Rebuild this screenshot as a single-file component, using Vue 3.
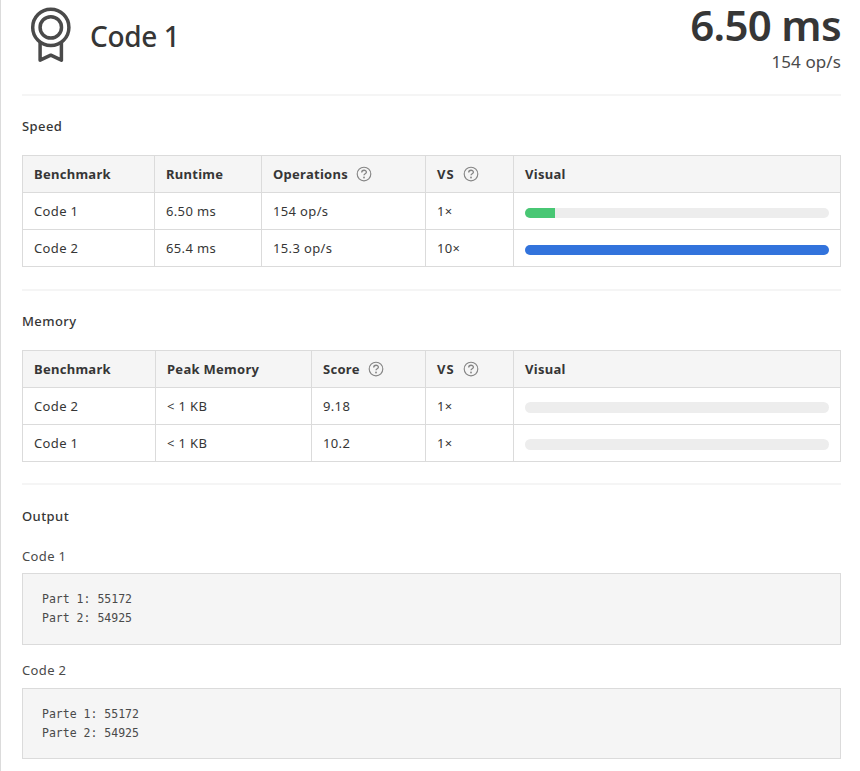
<script setup>
const speed = {
  title: 'Speed',
  widths: [132, 107, 164, 88, 327],
  heads: [['Benchmark'], ['Runtime'], ['Operations', true], ['VS', true], ['Visual']],
  rows: [
    { cells: ['Code 1', '6.50 ms', '154 op/s'], vs: '1', pct: 10, color: '#48c774' },
    { cells: ['Code 2', '65.4 ms', '15.3 op/s'], vs: '10', pct: 100, color: '#3273dc' },
  ],
}
const memory = {
  title: 'Memory',
  widths: [133, 156, 114, 88, 327],
  heads: [['Benchmark'], ['Peak Memory'], ['Score', true], ['VS', true], ['Visual']],
  rows: [
    { cells: ['Code 2', '< 1 KB', '9.18'], vs: '1', pct: 0, color: '#48c774', tall: true },
    { cells: ['Code 1', '< 1 KB', '10.2'], vs: '1', pct: 0, color: '#3273dc', tall: true },
  ],
}
const outputs = [
  { name: 'Code 1', text: 'Part 1: 55172\nPart 2: 54925' },
  { name: 'Code 2', text: 'Parte 1: 55172\nParte 2: 54925' },
]
</script>

<template>
  <main class="panel">
    <header class="hero">
      <svg class="award" viewBox="0 0 42 56" fill="none" stroke="#4a4a4a" stroke-width="3.5">
        <circle cx="20.8" cy="20.4" r="18.1" />
        <circle cx="20.8" cy="20.4" r="10.7" />
        <path d="M10.1 35v18.2l10.7-5 10.6 5V35" stroke-linejoin="round" />
      </svg>
      <h1 class="winner">Code 1</h1>
      <div class="result">
        <div class="time">6.50 ms</div>
        <div class="ops">154 op/s</div>
      </div>
    </header>

    <section v-for="s in [speed, memory]" :key="s.title" class="section">
      <h2 class="title">{{ s.title }}</h2>
      <table class="table">
        <colgroup>
          <col v-for="(w, i) in s.widths" :key="i" :style="{ width: w + 'px' }" />
        </colgroup>
        <thead>
          <tr>
            <th v-for="h in s.heads" :key="h[0]">
              <div class="head">
                <span :class="{ vs: h[0] === 'VS' }">{{ h[0] }}</span>
                <svg v-if="h[1]" class="help" viewBox="0 0 16 16" fill="none" stroke="#858585" stroke-width="1.15">
                  <circle cx="8" cy="8" r="6.8" />
                  <path d="M5.7 6.5C5.7 3.5 10.4 3.6 10.4 6.2C10.4 7.8 8 7.7 8 9.3" stroke-width="1.35" />
                  <circle cx="8" cy="11.5" r=".9" fill="#858585" stroke="none" />
                </svg>
              </div>
            </th>
          </tr>
        </thead>
        <tbody>
          <tr v-for="r in s.rows" :key="r.cells[0]">
            <td v-for="c in r.cells" :key="c">{{ c }}</td>
            <td><span>{{ r.vs }}</span><span class="times">×</span></td>
            <td>
              <div class="bar" :class="{ tall: r.tall }">
                <div class="fill" :style="{ width: r.pct + '%', background: r.color }"></div>
              </div>
            </td>
          </tr>
        </tbody>
      </table>
    </section>

    <section class="output">
      <h2 class="title">Output</h2>
      <div v-for="o in outputs" :key="o.name" class="block">
        <div class="name">{{ o.name }}</div>
        <pre class="code">{{ o.text }}</pre>
      </div>
    </section>
  </main>
</template>

<style>
body {
  margin: 0;
  background: #fff;
}
</style>

<style scoped>
.panel {
  box-sizing: border-box;
  height: 771px;
  padding: 0 19px 0 21px;
  border-left: 1px solid #dbdbdb;
  overflow: hidden;
  color: #363636;
  font-family: "Noto Sans", "Open Sans", sans-serif;
  font-size: 13px;
  font-weight: 400;
  letter-spacing: 0.35px;
  white-space: nowrap;
}
.hero {
  display: flex;
  height: 94px;
  letter-spacing: 0;
}
.award {
  width: 42px;
  height: 56px;
  margin: 7px 0 0 8px;
}
.winner {
  margin: 16px 0 0 18px;
  font-size: 28px;
  line-height: 40px;
  font-weight: 500;
  letter-spacing: -0.35px;
}
.result {
  margin-left: auto;
  text-align: right;
}
.time {
  height: 50px;
  font-size: 42px;
  line-height: 49px;
  font-weight: 600;
  letter-spacing: -0.7px;
}
.ops {
  font-size: 17px;
  line-height: 24px;
  letter-spacing: 0.1px;
  color: #4a4a4a;
}
.section {
  box-sizing: border-box;
  height: 195px;
  border-top: 2px solid #f5f5f5;
}
.section + .section {
  height: 194px;
}
.title {
  margin: 0;
  padding: 20px 0 19px;
  font-size: 13px;
  line-height: 20px;
  font-weight: 500;
  letter-spacing: 0.42px;
}
.table {
  width: 819px;
  table-layout: fixed;
  border-collapse: collapse;
}
th,
td {
  box-sizing: border-box;
  height: 37px;
  padding: 0 11px;
  border: 1px solid #dbdbdb;
  text-align: left;
  line-height: 20px;
}
th {
  background: #f5f5f5;
  font-weight: 700;
  letter-spacing: 0.28px;
}
.head {
  display: flex;
  align-items: center;
}
.vs {
  letter-spacing: 1px;
}
.help {
  width: 16px;
  height: 16px;
  margin-left: 8px;
}
.times {
  font-size: 13px;
}
.bar {
  height: 10px;
  margin-top: 4px;
  border-radius: 6px;
  overflow: hidden;
  background: #ededed;
}
.bar.tall {
  height: 11px;
  margin-top: 3px;
}
.fill {
  height: 100%;
}
.output {
  border-top: 2px solid #f5f5f5;
}
.output .title {
  padding: 21px 0 20px;
}
.block {
  height: 115px;
}
.name {
  height: 27px;
  line-height: 20px;
  color: #4a4a4a;
}
.block + .block .name {
  height: 28px;
}
.block + .block {
  margin-top: -1px;
}
.code {
  box-sizing: border-box;
  height: 72px;
  margin: 0;
  padding: 16px 19px;
  border: 1px solid #dbdbdb;
  background: #f5f5f5;
  color: #4a4a4a;
  font-family: "DejaVu Sans Mono", monospace;
  font-size: 11.5px;
  letter-spacing: 0;
  line-height: 19px;
}
.block + .block .code {
  height: 71px;
}
</style>
